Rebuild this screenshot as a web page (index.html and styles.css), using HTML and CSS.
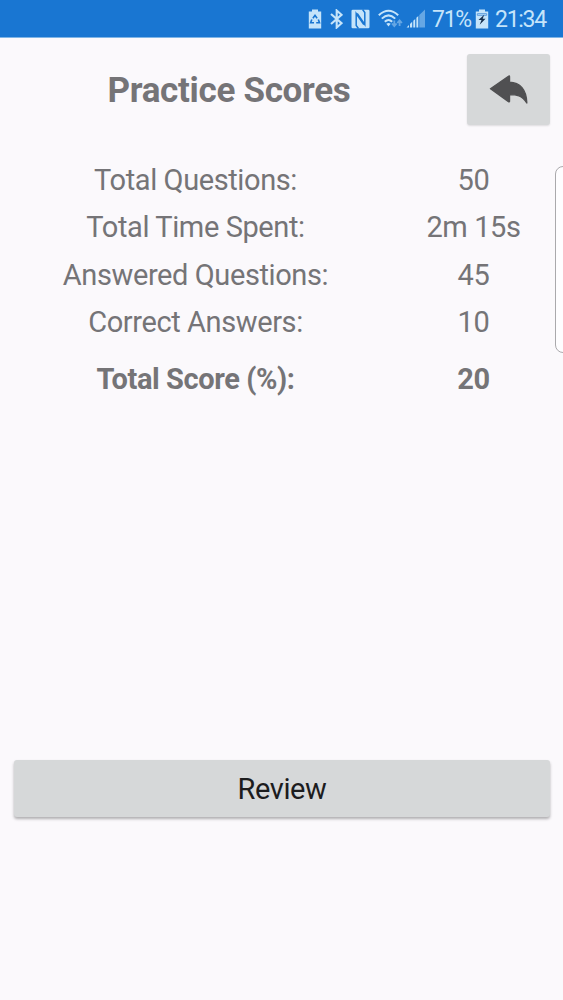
FILE: index.html
```html
<!DOCTYPE html>
<html lang="en">
<head>
<meta charset="UTF-8" />
<meta name="viewport" content="width=device-width, initial-scale=1" />
<title>Practice Scores</title>
<link rel="stylesheet" href="styles.css">
</head>
<body>

  <!-- Status bar -->
  <div class="status-bar">
    <svg class="icon-recycle" width="14" height="20" viewBox="0 0 14 20">
      <path fill="currentColor" d="M4 0.5h6v2h3.2v17H0.8v-17H4z" />
      <path fill="none" stroke="#1976d2" stroke-width="1.6" d="M4.9 9.2L7 6.3l2.1 2.9M10.3 10.4l1.2 3.4H8.2M6 13.8H2.6l1.2-3.4" />
    </svg>
    <svg class="icon-bluetooth" width="13" height="20" viewBox="0 0 13 20">
      <path fill="none" stroke="currentColor" stroke-width="2.1" d="M1 5l10.5 9.2-4.8 4.3v-17l4.8 4.3L1 15" />
    </svg>
    <svg class="icon-nfc" width="19" height="20" viewBox="0 0 19 20">
      <path fill="currentColor" d="M1.8 0.8H17.2q1.3 0 1.3 1.3V17.9q0 1.3-1.3 1.3H1.8Q0.5 19.2 0.5 17.9V2.1Q0.5 0.8 1.8 0.8z" />
      <path fill="none" stroke="#1976d2" stroke-width="1.5" d="M7.4 19.5L5.2 16.5V4.5l7.6 11.2M11.6 0.5l2.2 3v12L6.2 4.3" />
    </svg>
    <svg class="icon-wifi" width="25" height="20" viewBox="0 0 25 20">
      <path fill="none" stroke="currentColor" stroke-width="2" d="M0.8 6.2Q10.5-2.8 20.2 6.2M3.8 9.6Q10.5 3.2 17.2 9.6M6.8 12.8Q10.5 9 14.2 12.8" />
      <path fill="currentColor" d="M8.3 14.8Q10.5 13.1 12.7 14.8L10.5 17.5z" />
      <path class="faded" fill="none" stroke="currentColor" stroke-width="1.8" d="M16.3 11.5v5.5M14 14.5l2.3 2.7 2.3-2.7M21.6 17v-5.5M19.3 14l2.3-2.7 2.3 2.7" />
    </svg>
    <svg class="icon-signal" width="20" height="20" viewBox="0 0 20 20">
      <path class="faded" fill="currentColor" d="M13.3 6L19 0.5v18h-5.7z" />
      <path fill="currentColor" d="M0.5 18.5L3 16v2.5zM4 15l2.2-2.2v5.7H4zM7.3 11.8l1.9-1.9v8.6H7.3zM10.4 8.8l1.9-1.9v11.6h-1.9z" />
    </svg>
    <span class="percent">71%</span>
    <svg class="icon-battery" width="14" height="20" viewBox="0 0 14 20">
      <path fill="currentColor" d="M4 0.5h6v2h3.2v17H0.8v-17H4z" />
      <path fill="none" stroke="#5b9cdd" stroke-width="1" d="M2.3 4.7h9.4v1.6H2.3z" />
      <path fill="#17304f" d="M9.2 5.7L3.5 11h3l-1.8 4.8 5.8-6H7.7z" />
    </svg>
    <span class="clock">21:34</span>
  </div>

  <!-- Title and back button -->
  <header class="header">
    <h1>Practice Scores</h1>
    <button class="btn back" aria-label="Back">
      <svg width="40" height="30" viewBox="0 0 40 30">
        <path fill="#505052" stroke="#505052" stroke-width="1.4" stroke-linejoin="round" d="M1.5 13.7L19.5 1.2q1-0.7 1 0.5V7.3C31 7.5 37.5 14.5 37.8 28 33 20.4 27.5 19.6 20.5 19.6v6.3q0 1.4-1 0.7z" />
      </svg>
    </button>
  </header>

  <!-- Scores -->
  <main class="scores">
    <div class="row"><span>Total Questions:</span><span>50</span></div>
    <div class="row"><span>Total Time Spent:</span><span>2m 15s</span></div>
    <div class="row"><span>Answered Questions:</span><span>45</span></div>
    <div class="row"><span>Correct Answers:</span><span>10</span></div>
    <div class="row total"><span>Total Score (%):</span><span>20</span></div>
  </main>

  <button class="btn review">Review</button>

  <!-- Edge panel handle -->
  <div class="edge-handle"></div>

</body>
</html>
```
FILE: styles.css
```css
* {
  margin: 0; padding: 0; box-sizing: border-box;
}
body {
  position: relative;
  display: flex;
  flex-direction: column;
  height: 1000px;
  overflow: hidden;
  background: #fbf9fc;
  color: #757477;
  font-family: Roboto, sans-serif;
}

/* Status bar */
.status-bar {
  display: flex;
  justify-content: flex-end;
  align-items: center;
  height: 38px;
  padding-right: 17px;
  background: #1976d2;
  border-bottom: 1px solid #7fb5e6;
  color: #c5e4fa;
  white-space: nowrap;
}
.status-bar svg {
  flex: none;
}
.faded {
  opacity: 0.45;
}
.icon-recycle { margin-right: 8px; }
.icon-bluetooth { margin-right: 8px; }
.icon-nfc { margin-right: 8px; }
.icon-wifi { margin-right: 3px; }
.icon-signal { margin-right: 6px; }
.icon-battery { margin: 0 6px; }
.percent {
  width: 37px;
}
.clock {
  width: 51px;
}
.percent, .clock {
  padding-top: 2px;
  font-size: 23px;
  letter-spacing: -1.3px;
}

/* Buttons */
.btn {
  border: none;
  border-radius: 3px;
  background: #d6d8d9;
  box-shadow: 0 2px 3px rgba(0, 0, 0, 0.3);
  font-family: inherit;
}

/* Header */
.header {
  display: flex;
  align-items: center;
  height: 71px;
  margin: 16px 13px 0 0;
}
.header h1 {
  flex: 1;
  padding: 2px 9px 0 0;
  font-size: 35px;
  letter-spacing: -0.3px;
  text-align: center;
}
.back {
  display: flex;
  align-items: center;
  justify-content: center;
  width: 83px;
  height: 71px;
  box-shadow: 0 1px 2px rgba(0, 0, 0, 0.12);
}

/* Score table */
.scores {
  margin-top: 32px;
  font-size: 29px;
  letter-spacing: -0.4px;
}
.row {
  display: grid;
  grid-template-columns: 391px 165px;
  height: 47.4px;
  line-height: 47.4px;
  text-align: center;
}
.total {
  margin-top: 9px;
  font-weight: bold;
}

/* Review button */
.review {
  height: 57px;
  margin: 357px 13px 0 14px;
  padding-top: 1px;
  color: #1c1c1e;
  font-size: 29px;
  letter-spacing: -0.4px;
}

/* Tab peeking in from the right edge */
.edge-handle {
  position: absolute;
  top: 166px;
  right: -8px;
  width: 16px;
  height: 187px;
  border: 1px solid #aaa9ac;
  border-radius: 9px;
  background: #fefdff;
}
```
